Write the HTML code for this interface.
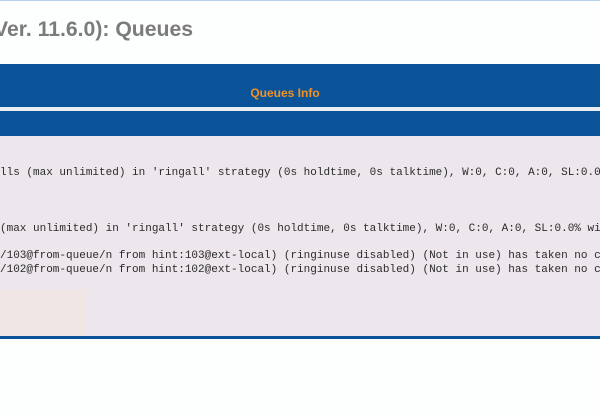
<!DOCTYPE html>
<html><head><style>
html,body{margin:0;padding:0;width:600px;height:416px;overflow:hidden;background:#fdfefe;position:relative}
div{position:absolute}
.t{left:-6px;top:18px;font:bold 21.2px "Liberation Sans",sans-serif;color:#7b7b7b;white-space:nowrap}
.m{left:0;font:11px/14px "Liberation Mono",monospace;color:#2a2a2a;white-space:pre}
</style></head><body>
<div style="left:0;top:0;width:600px;height:1px;background:#b8d0ee"></div>
<div class="t">Ver. 11.6.0): Queues</div>
<div style="left:0;top:64px;width:600px;height:43px;background:#0b5399"></div>
<div style="left:0;top:86px;width:570px;text-align:center;font:bold 12px 'Liberation Sans',sans-serif;color:#f39122">Queues Info</div>
<div style="left:0;top:107px;width:600px;height:4px;background:#e8eef2"></div>
<div style="left:0;top:111px;width:600px;height:25px;background:#0b5399"></div>
<div style="left:0;top:136px;width:600px;height:200px;background:#ede7ed"></div>
<div style="left:0;top:290px;width:86px;height:46px;background:#f0e6e4"></div>
<div class="m" style="top:166px">lls (max unlimited) in 'ringall' strategy (0s holdtime, 0s talktime), W:0, C:0, A:0, SL:0.0</div>
<div class="m" style="top:222px">(max unlimited) in 'ringall' strategy (0s holdtime, 0s talktime), W:0, C:0, A:0, SL:0.0% wi</div>
<div class="m" style="top:249px">/103@from-queue/n from hint:103@ext-local) (ringinuse disabled) (Not in use) has taken no c</div>
<div class="m" style="top:263px">/102@from-queue/n from hint:102@ext-local) (ringinuse disabled) (Not in use) has taken no c</div>
<div style="left:0;top:336px;width:600px;height:3px;background:#0b5399"></div>
</body></html>
